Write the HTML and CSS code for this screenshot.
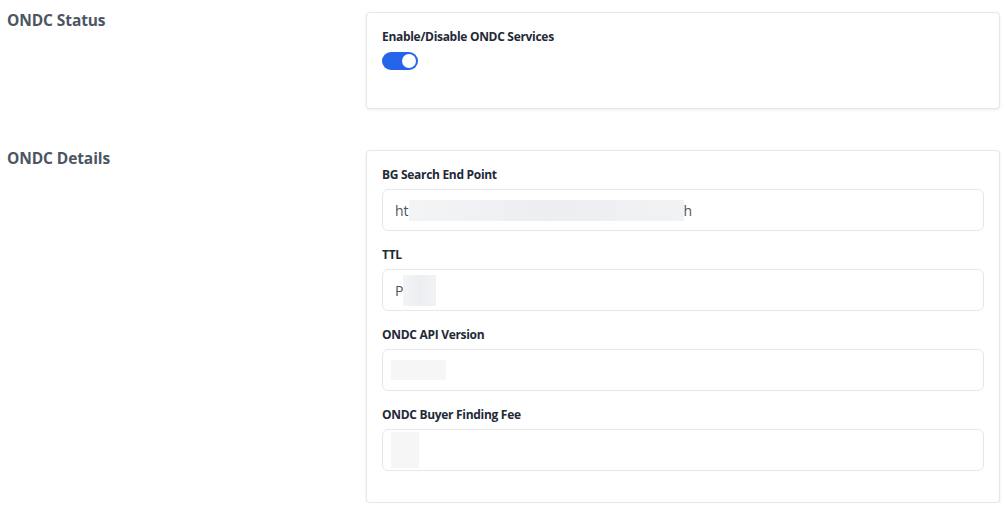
FILE: index.html
```html
<!DOCTYPE html>
<html>
<head lang="en">
    <meta charset="UTF-8">
    <title>ONDC Settings</title>
    <link rel="stylesheet" href="styles.css">
</head>
<body>
<div class="page">
    <!-- ONDC status -->
    <div class="section">
        <div class="sectionTitle">ONDC Status</div>
        <div class="card cardStatus">
            <div class="label">Enable/Disable ONDC Services</div>
            <div class="toggle"><span class="knob"></span></div>
        </div>
    </div>
    <!-- ONDC details -->
    <div class="section">
        <div class="sectionTitle">ONDC Details</div>
        <div class="card">
            <div class="group">
                <div class="label">BG Search End Point</div>
                <div class="input">ht<span class="blur" style="width:275px"></span>h</div>
            </div>
            <div class="group">
                <div class="label">TTL</div>
                <div class="input">P<span class="blur blurTall" style="width:33px"></span></div>
            </div>
            <div class="group">
                <div class="label">ONDC API Version</div>
                <div class="input input-empty"><span class="blur blurSoft" style="width:55px"></span></div>
            </div>
            <div class="group">
                <div class="label">ONDC Buyer Finding Fee</div>
                <div class="input input-empty"><span class="blur blurSoft blurTaller" style="width:28px"></span></div>
            </div>
        </div>
    </div>
</div>
</body>
</html>
```

FILE: styles.css
```css
body{
    margin:0;background:#fff;
    font-family:"Open Sans","Noto Sans",sans-serif;
}
.page{
    padding:12px 5px 0 7px;
}
.section{
    display:flex;margin-bottom:41px;
}
.section:last-child{
    margin-bottom:0;
}
.sectionTitle{
    width:359px;flex:none;
    font-size:15.5px;font-weight:700;color:#4b5563;
    line-height:18px;margin-top:-1px;letter-spacing:-0.1px;
}
.card{
    flex:1;background:#fff;
    border:1px solid #e5e7eb;border-radius:4px;
    box-shadow:0 1px 3px rgba(0,0,0,0.08);
    padding:16px 15px 16px 15px;
}
.cardStatus{
    padding-bottom:38px;
}
.label{
    font-size:12px;font-weight:700;color:#1f2937;
    line-height:16px;letter-spacing:-0.3px;
}
.toggle{
    width:36px;height:18px;border-radius:9px;
    background:#2563eb;margin-top:7px;
    display:flex;justify-content:flex-end;align-items:center;
    padding:0 2px;box-sizing:border-box;
}
.knob{
    width:14px;height:14px;border-radius:50%;background:#fff;
}
.group{
    margin-bottom:16px;
}
.group:last-child{
    margin-bottom:15px;
}
.input{
    margin-top:6px;height:42px;box-sizing:border-box;
    border:1px solid #e5e7eb;border-radius:6px;
    padding:0 12px;display:flex;align-items:center;
    font-size:14px;color:#4b5563;
}
.input-empty{
    padding-left:8px;
}
.blur{
    display:inline-block;height:21px;
    background:linear-gradient(90deg,#f3f4f6,#eceef1 50%,#f1f2f4);
}
.blurTall{
    height:31px;
}
.blurSoft{
    height:20px;background:#f6f6f7;
}
.blurTaller{
    height:36px;
}
```
